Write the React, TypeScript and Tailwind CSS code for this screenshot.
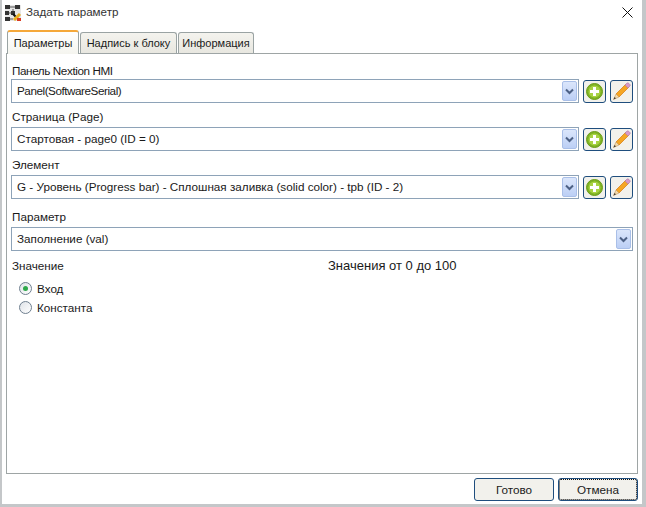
import React from "react";

const font = { fontFamily: '"Liberation Sans", Arial, sans-serif' };

function Chevron() {
  return (
    <div className="w-[15px] h-[20px] bg-gradient-to-b from-[#dbe6fb] to-[#bccff5] border border-[#a9bfe8] rounded-[2px] flex items-center justify-center shrink-0">
      <svg width="9" height="7" viewBox="0 0 9 7">
        <path d="M1 1.5 L4.5 5 L8 1.5" fill="none" stroke="#4d6185" strokeWidth="2" />
      </svg>
    </div>
  );
}

function Combo({ text, tight }: { text: string; tight?: boolean }) {
  return (
    <div className="flex-1 h-[24px] border border-[#8ea3b8] bg-white flex items-center justify-between pl-[5px] pr-[1px]">
      <span className={`text-[11.7px] text-[#1a1a1a] whitespace-nowrap ${tight ? "tracking-[-0.45px]" : ""}`}>{text}</span>
      <Chevron />
    </div>
  );
}

function IconBtn({ children }: { children: React.ReactNode }) {
  return (
    <div className="w-[23px] h-[23px] rounded-[3px] border border-[#1f4e7e] bg-[#f2f1ec] flex items-center justify-center shrink-0">
      {children}
    </div>
  );
}

function Plus() {
  return (
    <svg width="17" height="17" viewBox="0 0 17 17">
      <circle cx="8.5" cy="8.5" r="8" fill="#7fb324" stroke="#6c9c18" />
      <circle cx="8.5" cy="8.5" r="6" fill="#a8d243" />
      <path d="M8.5 4 V13 M4 8.5 H13" stroke="#ffffff" strokeWidth="3" />
    </svg>
  );
}

function Pencil() {
  return (
    <svg width="19" height="19" viewBox="0 0 19 19">
      <path d="M4 12 L14 2 L17 5 L7 15 Z" fill="#f5a623" stroke="#d9811a" strokeWidth="0.8" />
      <path d="M13 3 L15 1 Q16 0.5 17 1.5 L18 2.5 Q18.5 3.5 18 4 L16 6 Z" fill="#d79ac9" stroke="#b27aa6" strokeWidth="0.6" />
      <path d="M4 12 L7 15 L1.5 17.5 Z" fill="#f3dcb0" stroke="#c89a5a" strokeWidth="0.6" />
      <path d="M1.5 17.5 L2.6 15 L4 16.2 Z" fill="#333" />
    </svg>
  );
}

function Field({ label, text, buttons, gap, labelGap, tight }: { label: string; text: string; buttons?: boolean; gap: string; labelGap: string; tight?: boolean }) {
  return (
    <div className={gap}>
      <div className={`text-[11.7px] leading-[16px] pl-[1px] text-[#1a1a1a] ${labelGap} ${tight ? "tracking-[-0.4px]" : ""}`}>{label}</div>
      <div className="flex items-center">
        <Combo text={text} tight={tight} />
        {buttons && (
          <div className="flex items-center gap-[4px] ml-[4px]">
            <IconBtn><Plus /></IconBtn>
            <IconBtn><Pencil /></IconBtn>
          </div>
        )}
      </div>
    </div>
  );
}

function Radio({ label, checked }: { label: string; checked?: boolean }) {
  return (
    <div className="flex items-center h-[19px]">
      <div className="w-[13px] h-[13px] rounded-full border border-[#6f7f8f] bg-gradient-to-br from-[#dfe3e8] to-[#ffffff] flex items-center justify-center mr-[5px]">
        {checked && <div className="w-[5px] h-[5px] rounded-full bg-[#2ea84a]" />}
      </div>
      <span className="text-[11.7px] text-[#1a1a1a]">{label}</span>
    </div>
  );
}

function Tab({ label, active, w }: { label: string; active?: boolean; w: string }) {
  if (active) {
    return (
      <div className={`${w} h-[24px] mb-[-1px] z-10 border-x border-[#9aa3a3] rounded-t-[3px] bg-gradient-to-b from-[#ffffff] to-[#f5f5ef] border-t-2 border-t-[#f5a83a] flex items-center justify-center text-[11px] text-[#1a1a1a]`}>
        {label}
      </div>
    );
  }
  return (
    <div className={`${w} h-[21px] border border-b-0 border-[#9aa3a3] rounded-t-[3px] bg-gradient-to-b from-[#f4f3ee] to-[#e8e7e0] flex items-center justify-center text-[11px] text-[#1a1a1a]`}>
      {label}
    </div>
  );
}

export default function App() {
  return (
    <div style={font} className="w-[646px] h-[507px] bg-[#c4c7c9] overflow-hidden">
      <div className="w-[640px] h-[504px] ml-[2px] bg-white flex flex-col">
        <div className="h-[25px] flex items-center pl-[3px] pr-[9px] shrink-0">
          <svg width="16" height="16" viewBox="0 0 16 16" className="mr-[5px]">
            <rect width="16" height="16" fill="#e6e6e6" />
            <path d="M0 0h5v4H0zM10 0h5v4h-5zM0 6h4v4H0zM6 6h4v4H6zM0 12h5v4H0z" fill="#333" />
            <path d="M5 2h5M4 8h2M8 4v2M5 14h3" stroke="#555" strokeWidth="1" />
            <path d="M8 9 L14 15" stroke="#111" strokeWidth="2" />
            <path d="M9 15 L15 9" stroke="#e8b020" strokeWidth="3" />
            <path d="M12 13h4v3h-4z" fill="#d93a20" />
          </svg>
          <span className="text-[11.6px] text-[#333] mb-[2px]">Задать параметр</span>
          <svg width="11" height="11" viewBox="0 0 11 11" className="ml-auto">
            <path d="M0.5 0.5 L10.5 10.5 M10.5 0.5 L0.5 10.5" stroke="#111" strokeWidth="1" />
          </svg>
        </div>
        <div className="flex items-end gap-[1px] ml-[5px] h-[28px] shrink-0">
          <Tab label="Параметры" active w="w-[72px]" />
          <Tab label="Надпись к блоку" w="w-[97px]" />
          <Tab label="Информация" w="w-[76px]" />
        </div>
        <div className="ml-[4px] w-[632px] h-[421px] border border-[#9ea5a5] px-[4px] pt-[9px] shrink-0">
          <Field label="Панель Nextion HMI" text="Panel(SoftwareSerial)" buttons tight gap="mb-[6px]" labelGap="mb-0" />
          <Field label="Страница (Page)" text="Стартовая - page0 (ID = 0)" buttons gap="mb-[6px]" labelGap="mb-[2px]" />
          <Field label="Элемент" text="G - Уровень (Progress bar) - Сплошная заливка (solid color) - tpb (ID - 2)" buttons gap="mb-[10px]" labelGap="mb-[2px]" />
          <Field label="Параметр" text="Заполнение (val)" gap="mb-[6px]" labelGap="mb-[2px]" />
          <div className="flex items-center h-[18px]">
            <span className="text-[11.7px] pl-[1px] text-[#1a1a1a] w-[317px]">Значение</span>
            <span className="text-[13px] text-[#1a1a1a]">Значения от 0 до 100</span>
          </div>
          <div className="ml-[8px] mt-[4px]">
            <Radio label="Вход" checked />
            <Radio label="Константа" />
          </div>
        </div>
        <div className="flex justify-end gap-[4px] mr-[4px] mt-[4px]">
          <button className="w-[80px] h-[23px] border border-[#1f4e7e] rounded-[3px] bg-[#f2f1ec] text-[11.7px] text-[#1a1a1a]">Готово</button>
          <button className="w-[80px] h-[23px] border border-[#1f4e7e] rounded-[3px] bg-[#f2f1ec] text-[11.7px] text-[#1a1a1a] outline-1 outline-dotted outline-[#111] outline-offset-[-2px]">Отмена</button>
        </div>
      </div>
    </div>
  );
}
